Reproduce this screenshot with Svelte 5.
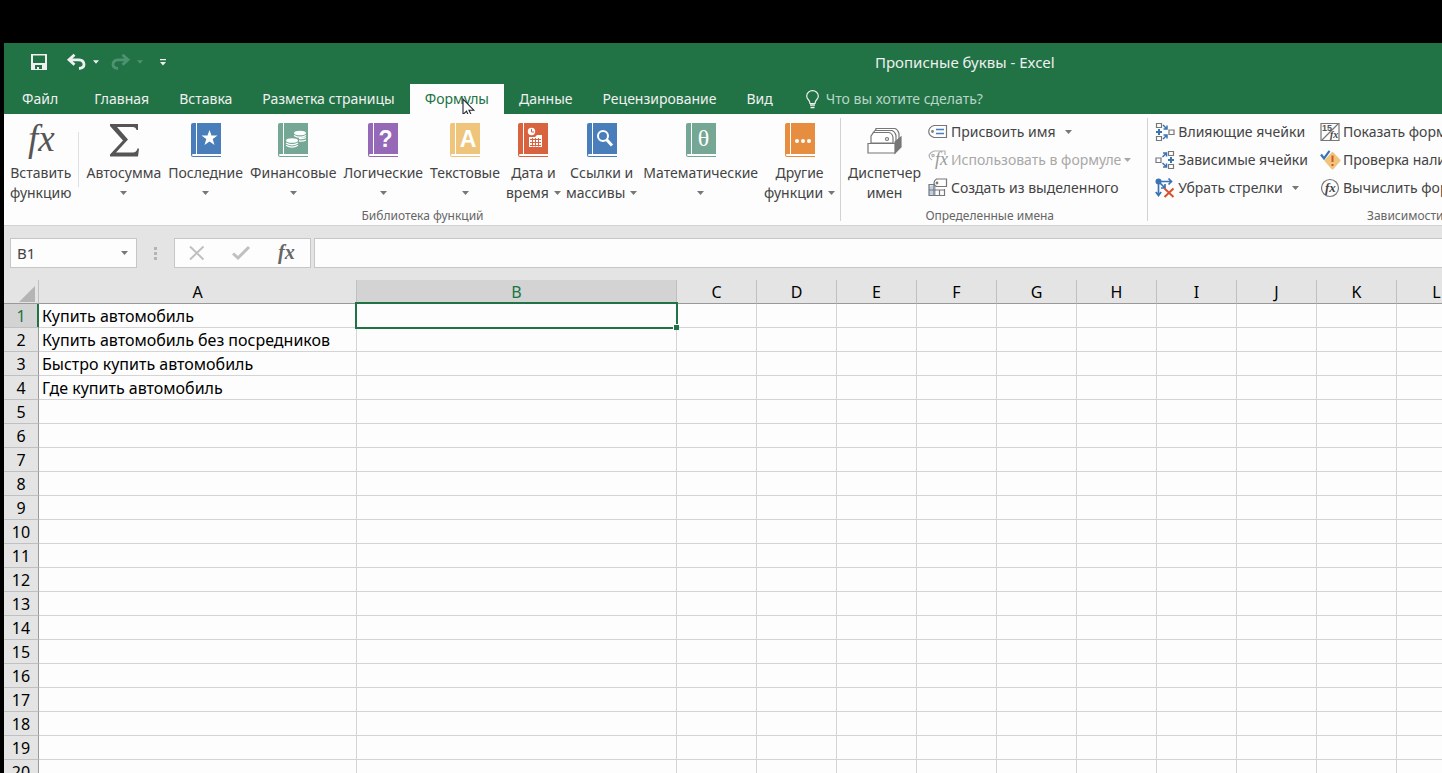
<script lang="ts">
  const tabs = ['Главная', 'Вставка', 'Разметка страницы', 'Формулы', 'Данные', 'Рецензирование', 'Вид'];
  let activeTab = $state('Формулы');

  const library = [
    { icon: 'star', color: '#4a7ebb', lines: ['Последние'] },
    { icon: 'coins', color: '#74a794', lines: ['Финансовые'] },
    { icon: 'question', color: '#9668b8', lines: ['Логические'] },
    { icon: 'letter', color: '#eec57b', lines: ['Текстовые'] },
    { icon: 'date', color: '#d9623f', lines: ['Дата и', 'время'] },
    { icon: 'lens', color: '#4a7ebb', lines: ['Ссылки и', 'массивы'] },
    { icon: 'theta', color: '#74a794', lines: ['Математические'] },
    { icon: 'dots', color: '#e68d40', lines: ['Другие', 'функции'] }
  ];

  const names = [
    { icon: 'tag', text: 'Присвоить имя', caret: true, spaced: true },
    { icon: 'use', text: 'Использовать в формуле', caret: true, disabled: true },
    { icon: 'create', text: 'Создать из выделенного' }
  ];
  const arrows = [
    { icon: 'precedents', text: 'Влияющие ячейки' },
    { icon: 'dependents', text: 'Зависимые ячейки' },
    { icon: 'remove', text: 'Убрать стрелки', caret: true, spaced: true }
  ];
  const audit = [
    { icon: 'show', text: 'Показать формулы' },
    { icon: 'check', text: 'Проверка наличия ошибок', caret: true },
    { icon: 'evaluate', text: 'Вычислить формулу' }
  ];

  const columns = 'ABCDEFGHIJKL'.split('');
  const rows = Array.from({ length: 20 }, (_, i) => i + 1);
  const cells: Record<string, string> = {
    A1: 'Купить автомобиль',
    A2: 'Купить автомобиль без посредников',
    A3: 'Быстро купить автомобиль',
    A4: 'Где купить автомобиль'
  };
  let selected = $state({ col: 'B', row: 1 });
  let address = $derived(selected.col + selected.row);
</script>

{#snippet caret()}
  <svg class="caret" width="7" height="4" viewBox="0 0 7 4"><path d="M0 0h7L3.500 4z" fill="currentColor" /></svg>
{/snippet}

{#snippet book(icon, color)}
  <svg width="30" height="34" viewBox="0 0 30 34">
    <path d="M2 0H30V34H2Q0 34 0 32V2Q0 0 2 0z" fill={color} />
    <path d="M5 0h1v31h24v2H2q-1 0-1-1t1-1h3z" fill="#fff" />
    {#if icon === 'star'}
      <path d="M18.500 7l2 5.600h6l-4.800 3.500 1.800 5.900-5-3.600-5 3.600 1.800-5.900-4.800-3.500h6z" fill="#fff" />
    {:else if icon === 'coins'}
      <g fill="#fff">
        <ellipse cx="22" cy="10" rx="6" ry="2.300" /><ellipse cx="14" cy="17.500" rx="6" ry="2.300" />
      </g>
      <g fill="none" stroke="#fff" stroke-width="1.300">
        <path d="M16 12.500q6 3.500 12 0M21 15.500q4 .5 7-1M21 18q4 .5 7-1M8 20q6 3.500 12 0M8 22.300q6 3.500 12 0" />
      </g>
    {:else if icon === 'question'}
      <text x="17.500" y="24" class="bold-glyph">?</text>
    {:else if icon === 'letter'}
      <text x="18" y="24" class="bold-glyph">A</text>
    {:else if icon === 'date'}
      <circle cx="13.500" cy="8.500" r="3.700" fill="#fff" />
      <path d="M13.500 6v3h2.500" fill="none" stroke={color} />
      <path d="M11 14h6l2-2h5v12H11z" fill="#fff" />
      <path d="M12 16.500h11M12 19.500h11M12 22.500h11M14.500 15v8.500M17.500 15v8.500M20.500 15v8.500" stroke={color} stroke-width="1" />
    {:else if icon === 'lens'}
      <circle cx="16" cy="13" r="5" fill="none" stroke="#fff" stroke-width="2" />
      <path d="M19.500 16.500l5.500 6" stroke="#fff" stroke-width="3" />
    {:else if icon === 'theta'}
      <text x="17.500" y="23" class="theta">θ</text>
    {:else}
      <g fill="#fff"><circle cx="12" cy="18" r="2" /><circle cx="18" cy="18" r="2" /><circle cx="24" cy="18" r="2" /></g>
    {/if}
  </svg>
{/snippet}

{#snippet smallIcon(icon)}
  <svg width="20" height="20" viewBox="0 0 20 20" fill="none" stroke="#777" stroke-width="1.200">
    {#if icon === 'tag'}
      <path d="M6 3.500h12.500v12H6Q1 14 .7 9.500 1 5 6 3.500z" />
      <circle cx="4.500" cy="9.500" r=".8" />
      <path d="M8 7.500h8M8 11.500h8" stroke="#4a7ebb" stroke-width="1.400" />
    {:else if icon === 'use'}
      <g stroke="#b0b0b0"><path d="M4 10Q1 8 1 5.500 2 2.500 6 1h11v4" /><circle cx="5" cy="5.500" r="1.200" /></g>
      <text x="7" y="15" class="fx" font-size="18" fill="#999" stroke="none">fx</text>
    {:else if icon === 'create'}
      <path d="M1 7.500h7v10H1z" fill="#bdd0e6" stroke="none" />
      <path d="M6 6.500H1v11h15.500V11M1 12h15M6 7v10M11.500 12v5.500" />
      <path d="M8.500 1h10v7.500h-10Q6 7.500 6 5 6 2.500 8.500 1z" fill="#fff" />
      <circle cx="9" cy="5" r=".8" />
    {:else if icon === 'precedents'}
      <path d="M1.500 1.500h5v4h-5zM1.500 14.500h5v4h-5zM14 8h5v4.500h-5z" />
      <path d="M4 7v6M1 10h6" stroke="#3b74b5" stroke-width="2" />
      <path d="M8 3l4 4m0-3.500V7H8.500M8 17l4-4m-3.500 0H12v3.500" stroke="#3b74b5" stroke-width="1.500" />
    {:else if icon === 'dependents'}
      <path d="M13.500 1.500h5v4h-5zM13.500 14.500h5v4h-5zM1 8h5v4.500H1z" />
      <path d="M16 7v6M13 10h6" stroke="#3b74b5" stroke-width="2" />
      <path d="M7.500 7l4-4m-3.500 0h3.500v3.500M7.500 13l4 4m-3.500 0h3.500v-3.500" stroke="#3b74b5" stroke-width="1.500" />
    {:else if icon === 'remove'}
      <circle cx="3.500" cy="3.500" r="3" fill="#3b74b5" stroke="none" />
      <path d="M6 3.500h10M13.500.5l3 3-3 3M3.500 6v11M.8 14l2.700 3.500L6.200 14M5 5l5 5m0-4v4H6" stroke="#3b74b5" stroke-width="1.700" />
      <path d="M9.500 10.500l9 8.500M18.500 10.500L9.500 19" stroke="#d9512c" stroke-width="2" />
    {:else if icon === 'show'}
      <path d="M1 1.500h18v17H1zM2 18L18 2" />
      <text x="2" y="9" font-size="9" class="mini" fill="#555" stroke="none">15</text>
      <text x="10" y="16" class="fx heavy" font-size="10" fill="#444" stroke="none">fx</text>
    {:else if icon === 'check'}
      <path d="M12.500 3l7 7.500-7 8-7-8z" fill="#eec57b" stroke="#eec57b" stroke-width="2" stroke-linejoin="round" />
      <path d="M12.500 5.500v6.500M12.500 14v2" stroke="#d9512c" stroke-width="2" />
      <path d="M1 4.500L4 8.500 9.500.8" stroke="#3b74b5" stroke-width="2.200" />
    {:else}
      <circle cx="10" cy="10" r="8.500" />
      <text x="5" y="14" class="fx heavy" font-size="13" fill="#444" stroke="none">fx</text>
    {/if}
  </svg>
{/snippet}

{#snippet smallList(items)}
  <div class="small-list">
    {#each items as item}
      <button class="small" disabled={item.disabled}>
        {@render smallIcon(item.icon)}
        <span class:spaced={item.spaced}>{item.text}</span>
        {#if item.caret}{@render caret()}{/if}
      </button>
    {/each}
  </div>
{/snippet}

<div class="window">
  <header>
    <div class="titlebar">
      <div class="quick">
        <button aria-label="Сохранить">
          <svg width="16" height="16" viewBox="0 0 16 16"><path d="M0 0h16v16H0zM2 1.500V9h12V1.500zM4 11v4h2v-2h2v2h3v-4z" fill="#f0f0f0" fill-rule="evenodd" /></svg>
        </button>
        <button class="undo" aria-label="Отменить">
          <svg width="19" height="16" viewBox="0 0 19 16" fill="none" stroke="#f0f0f0" stroke-width="2.800"><path d="M7.500 .8L2 5.800l5.500 5M2.500 5.800H12q5 .5 5 4.700 0 3.500-5 4" /></svg>
          {@render caret()}
        </button>
        <button class="redo" aria-label="Вернуть">
          <svg width="19" height="16" viewBox="0 0 19 16" fill="none" stroke="currentColor" stroke-width="2.800"><path d="M11.500 .8L17 5.800l-5.500 5M16.500 5.800H7q-5 .5-5 4.700 0 3.500 5 4" /></svg>
          {@render caret()}
        </button>
        <button class="customize" aria-label="Настройка панели">
          <svg width="6" height="7" viewBox="0 0 6 7"><path d="M0 0h6v1.200H0zM0 3h6L3 6.500z" fill="#f0f0f0" /></svg>
        </button>
      </div>
      <div class="title">Прописные буквы - Excel</div>
    </div>

    <nav>
      <button class="file">Файл</button>
      {#each tabs as tab}
        <button class:active={tab === activeTab} onclick={() => activeTab = tab}>
          {tab}
          {#if tab === 'Формулы'}
            <svg class="pointer" width="13" height="20" viewBox="0 0 13 20"><path d="M1 1v15.500l3.500-3.300 2.700 5.800 2.500-1.200L7 12.200h4.800z" fill="#fff" stroke="#223" stroke-width="1.100" /></svg>
          {/if}
        </button>
      {/each}
      <label class="tell">
        <svg width="13" height="19" viewBox="0 0 13 19" fill="none" stroke="#f0f0f0" stroke-width="1.200"><path d="M4 13.500Q4 11.500 2.200 9.500 .7 8 .7 6a5.800 5.300 0 0 1 11.600 0q0 2-1.500 3.500Q9 11.500 9 13.500z" /><path d="M4 15h5M4.500 17.500h4" stroke-width="1.500" /></svg>
        <input type="text" placeholder="Что вы хотите сделать?" aria-label="Что вы хотите сделать?">
      </label>
    </nav>
  </header>

  <section class="ribbon">
    <div class="group">
      <div class="items">
        <button class="big stacked first">
          <svg width="30" height="34" viewBox="0 0 30 34"><text x="2" y="28" class="fx" font-size="37" fill="#555">fx</text></svg>
          <span>Вставить</span>
          <span>функцию</span>
        </button>
        <button class="big">
          <svg width="30" height="34" viewBox="0 0 30 34"><path d="M1 1h28v6h-1.500q-.5-3-4-3H8l11 12.500L7 29.500h17q3.500 0 4.500-4H30l-1 8H1v-2l13-14L1 3z" fill="#555" /></svg>
          <span>Автосумма</span>
          <span class="drop">{@render caret()}</span>
        </button>
        {#each library as item}
          <button class="big" class:stacked={item.lines.length > 1}>
            {@render book(item.icon, item.color)}
            <span>{item.lines[0]}</span>
            <span class="drop">{item.lines[1] ?? ''}{@render caret()}</span>
          </button>
        {/each}
      </div>
      <h2>Библиотека функций</h2>
    </div>

    <div class="group names">
      <div class="items">
        <button class="big">
          <svg width="36" height="34" viewBox="0 0 36 34" fill="#fff" stroke="#777" stroke-width="1.200">
            <path d="M8 20Q7 12 9 5.500h19q3 1 4 5v6l-6 5z" />
            <path d="M6 20V10l2-2.500h17q3 1 4 5v9z" />
            <path d="M4 20v-7l2.500-3.500H22q3.500 1 4 5V20z" />
            <path d="M28 19l6-5v10l-6 6z" fill="#777" />
            <circle cx="20" cy="16" r="1.500" />
            <path d="M1 20.500h27v9.500H1z" />
          </svg>
          <span>Диспетчер</span>
          <span>имен</span>
        </button>
        {@render smallList(names)}
      </div>
      <h2>Определенные имена</h2>
    </div>

    <div class="group wide">
      <div class="items audit">
        {@render smallList(arrows)}
        {@render smallList(audit)}
      </div>
      <h2>Зависимости формул</h2>
    </div>
  </section>

  <div class="formula-bar">
    <div class="name-box">
      <input type="text" value={address} aria-label="Имя">
      <button aria-label="Список имен">{@render caret()}</button>
    </div>
    <div class="grip"><i></i><i></i><i></i></div>
    <div class="entry">
      <button aria-label="Отмена"><svg width="16" height="14" viewBox="0 0 16 14" fill="none" stroke="#c0c0c0" stroke-width="2"><path d="M1 .5l13.500 13M14.500 .5L1 13.500" /></svg></button>
      <button aria-label="Ввод"><svg width="18" height="14" viewBox="0 0 18 14" fill="none" stroke="#c0c0c0" stroke-width="3"><path d="M1 7.500l5 4.500L17 1" /></svg></button>
      <button aria-label="Вставить функцию"><svg width="18" height="20" viewBox="0 0 18 20"><text x="1" y="16" class="fx heavy" font-size="20" fill="#666">fx</text></svg></button>
    </div>
    <input class="formula" type="text" aria-label="Строка формул">
  </div>

  <main>
    <table>
      <colgroup>
        <col class="col-head">
        <col class="col-a">
        <col class="col-b">
        {#each columns.slice(2) as _}<col>{/each}
      </colgroup>
      <thead>
        <tr>
          <th class="corner"><svg width="16" height="16" viewBox="0 0 16 16"><path d="M16 0v16H0z" fill="#b4b4b4" /></svg></th>
          {#each columns as col}
            <th class:current={col === selected.col}>{col}</th>
          {/each}
        </tr>
      </thead>
      <tbody>
        {#each rows as row}
          <tr>
            <th class:current={row === selected.row}>{row}</th>
            {#each columns as col}
              <td class:selected={col + row === address} onclick={() => selected = { col, row }}>{cells[col + row] ?? ''}</td>
            {/each}
          </tr>
        {/each}
      </tbody>
    </table>
  </main>
</div>

<style>
  :global(body){background: #000; overflow: hidden;}

  .window{
    display: flex; flex-direction: column;
    height: 100vh;
    box-sizing: border-box;
    padding: 43px 0 0 4px;
    font-family: "Noto Sans", "Open Sans", sans-serif;
    font-size: 14px;
    line-height: 20px;
    color: #444;
  }
  button, input{
    margin: 0; padding: 0;
    border: none;
    background: none;
    font: inherit;
    color: inherit;
    white-space: nowrap;
  }
  input{min-width: 0; outline: none;}
  svg{display: block; flex: none; overflow: visible;}
  .caret{color: #777;}

  header{background: #217346; color: #f0f0f0;}
  .titlebar{display: grid; grid-template-columns: 871fr 567fr; align-items: center; height: 38px; padding-bottom: 3px;}
  .quick{display: flex; align-items: center; padding-left: 27px;}
  .quick button{display: flex; align-items: center; gap: 7px;}
  .quick .caret{width: 6px; color: #f0f0f0;}
  .quick .undo{margin-left: 20px;}
  .quick .redo{margin-left: 12px; color: #4f9270;}
  .quick .redo .caret{color: #4f9270;}
  .quick .customize{margin-left: 17px;}
  .title{font-size: 15px; white-space: nowrap;}

  nav{display: flex; height: 30px; overflow: hidden;}
  nav button{position: relative; padding: 0 15px;}
  nav .file{padding: 0 21px 0 18px;}
  nav .active{background: #fdfdfd; color: #217346;}
  .pointer{position: absolute; left: 52px; top: 14px;}
  .tell{display: flex; align-items: center; gap: 7px; padding-left: 18px;}
  .tell input{width: 200px;}
  .tell input::placeholder{color: #b9d5c6; opacity: 1;}

  .ribbon{
    display: flex;
    height: 111px;
    background: #fdfdfd;
    border-bottom: 1px solid #d2d2d2;
    overflow: hidden;
  }
  .group{
    position: relative;
    display: flex; flex-direction: column; flex: none;
    box-sizing: border-box;
    padding: 4px 4px 0;
  }
  .group::after{
    content: '';
    position: absolute; right: 0; top: 4px; bottom: 4px;
    width: 1px;
    background: #d2d2d2;
  }
  .names{padding-right: 14px;}
  .wide{min-width: 562px;}
  .items{display: flex; flex: 1; gap: 1px;}
  .audit{gap: 6px;}
  h2{
    margin: 0;
    font-size: 12px; line-height: 18px; font-weight: 400;
    text-align: center;
    color: #666;
  }
  .big{
    display: flex; flex-direction: column; align-items: center;
    padding: 5px 3px 0;
  }
  .stacked{padding: 5px 2px 0;}
  .big svg:first-child{margin-bottom: 6px;}
  .big.first{padding-right: 7px; margin-right: 4px; position: relative;}
  .big.first::after{
    content: '';
    position: absolute; right: 0; top: 14px; height: 55px;
    width: 1px;
    background: #e0e0e0;
  }
  .drop{display: flex; align-items: center; gap: 5px; height: 20px;}
  .big .drop .caret{margin: 0;}

  .small-list{display: flex; flex-direction: column;}
  .small{display: flex; align-items: center; gap: 3px; height: 28px; padding: 0 3px;}
  .small .spaced{margin-right: 6px;}
  .small:disabled, .small:disabled .caret{color: #a8a8a8;}

  .fx{font-family: "Liberation Serif", serif; font-style: italic;}
  .heavy{font-weight: 700;}
  .bold-glyph{font-family: "Liberation Sans", sans-serif; font-size: 23px; font-weight: 700; fill: #fff; text-anchor: middle;}
  .theta{font-family: "Liberation Serif", serif; font-size: 24px; fill: #fff; text-anchor: middle;}
  .mini{font-family: "Liberation Sans", sans-serif; font-weight: 700;}

  .formula-bar{display: flex; height: 30px; padding: 12px 0 12px 6px; background: #e4e4e4;}
  .name-box, .entry, .formula{
    display: flex;
    box-sizing: border-box;
    background: #fdfdfd;
    border: 1px solid #c6c6c6;
  }
  .name-box{width: 127px; padding: 0 8px 0 6px; font-size: 15px;}
  .name-box input{flex: 1;}
  .name-box button{display: flex; align-items: center;}
  .grip{display: flex; flex-direction: column; justify-content: center; gap: 2px; width: 37px; align-items: center;}
  .grip i{width: 3px; height: 3px; background: #b4b4b4;}
  .entry{width: 137px; padding-right: 2px;}
  .entry button{flex: 1; display: flex; align-items: center; justify-content: center;}
  .formula{flex: 1; margin-left: 3px; border-right: none; padding: 0 6px;}

  main{flex: 1; min-height: 0; overflow: hidden; background: #fdfdfd;}
  table{
    width: max-content;
    table-layout: fixed;
    border-collapse: separate; border-spacing: 0;
    font-size: 16px;
    color: #000;
  }
  col{width: 80px;}
  .col-head{width: 35px;}
  .col-a{width: 318px;}
  .col-b{width: 320px;}
  th, td{
    box-sizing: border-box;
    height: 24px;
    padding: 2px 0 0;
    line-height: 21px;
    border-right: 1px solid #d4d4d4;
    border-bottom: 1px solid #d4d4d4;
    white-space: nowrap;
  }
  th{background: #e4e4e4; font-weight: 400;}
  thead th{border-right-color: #c0c0c0; border-bottom-color: #999;}
  tbody th{border-right-color: #999; border-bottom-color: #c0c0c0;}
  th.current{background: #d3d3d3; color: #217346;}
  tbody th.current{box-shadow: inset -1px 0 #217346; border-right-color: #217346;}
  .corner svg{margin: 3px 0 0 15px;}
  td{padding-left: 3px;}
  .selected{position: relative;}
  .selected::before{
    content: '';
    position: absolute; inset: -2px;
    border: 2px solid #217346;
  }
  .selected::after{
    content: '';
    position: absolute; right: -3px; bottom: -3px;
    width: 5px; height: 5px;
    background: #217346;
    border-top: 1px solid #fdfdfd; border-left: 1px solid #fdfdfd;
  }
</style>
